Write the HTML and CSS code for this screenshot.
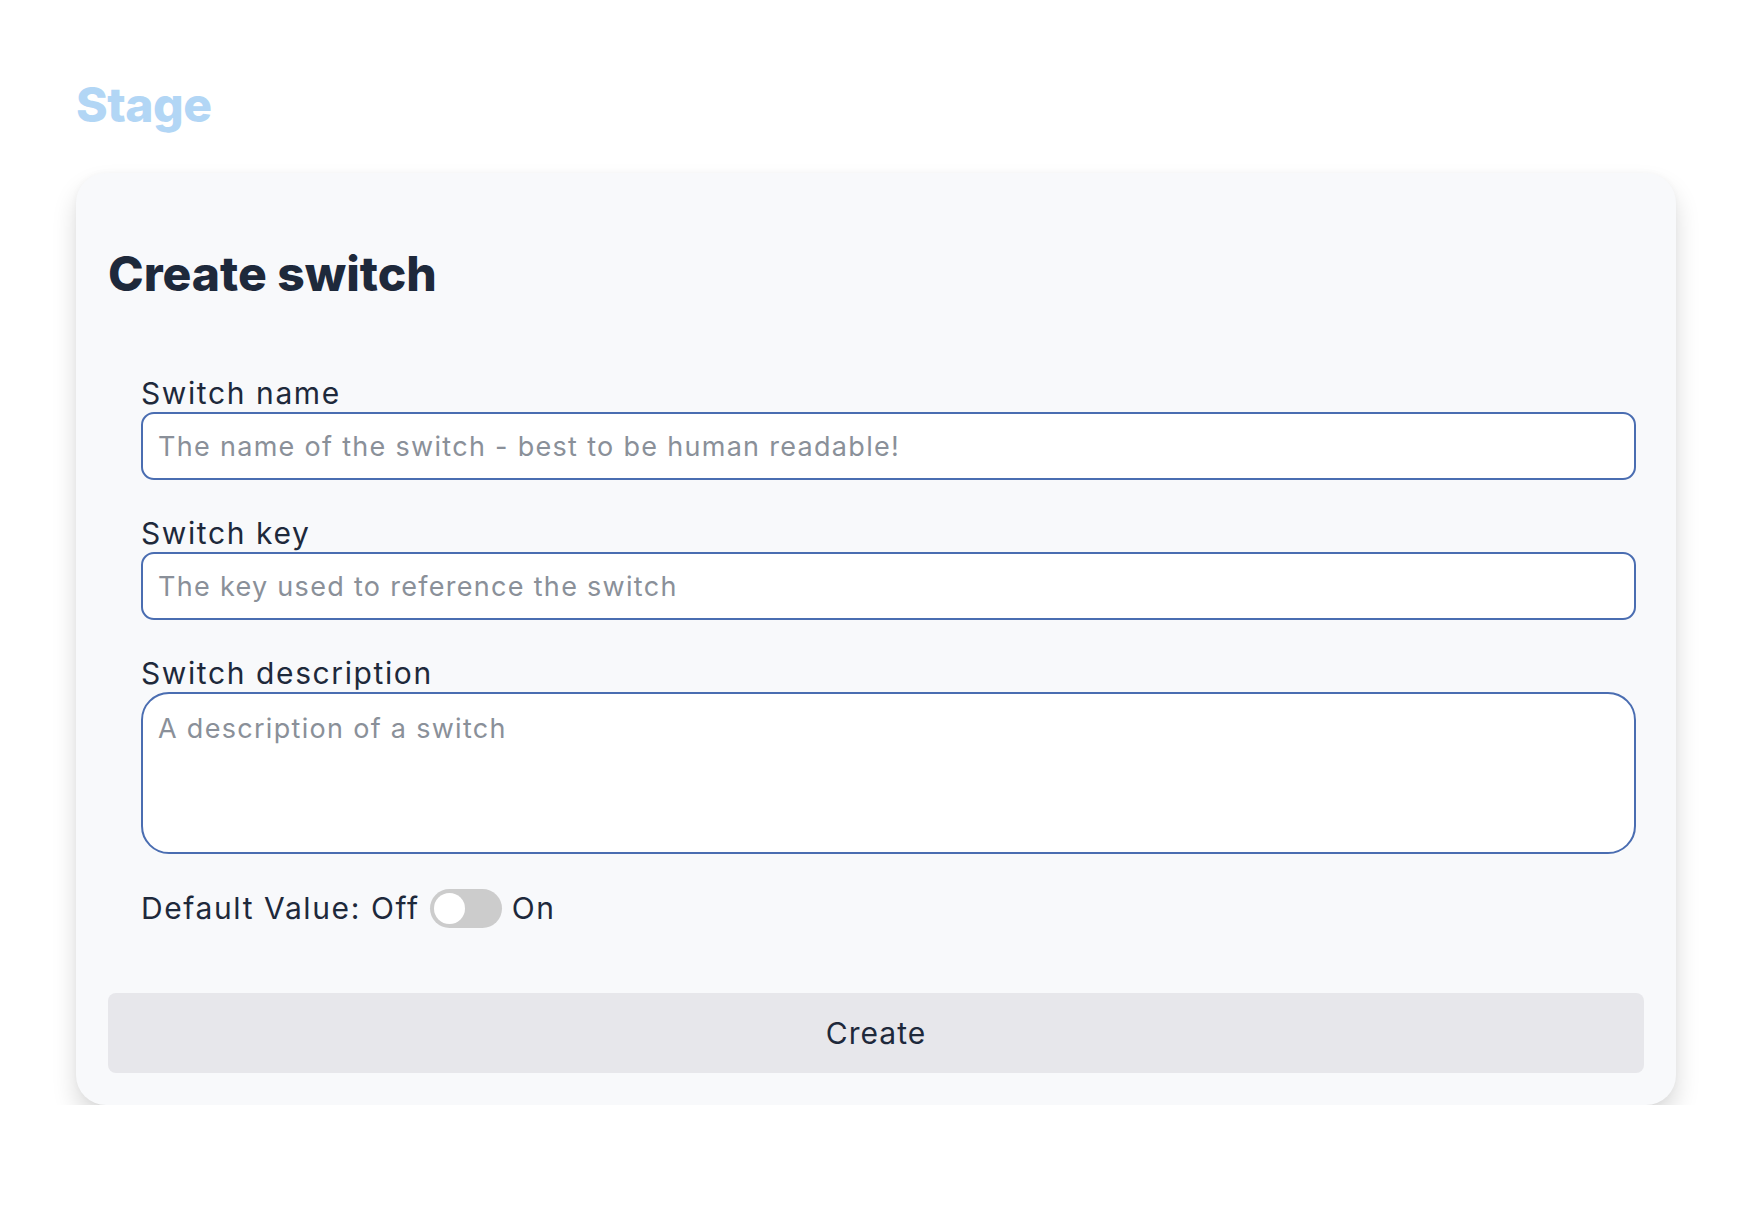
FILE: index.html
```html
<!DOCTYPE html>
<html lang="en">
<head>
<meta charset="utf-8">
<title>Create switch</title>
<link rel="stylesheet" href="styles.css">
</head>
<body>
<div class="page">
  <div class="logo">Stage</div>
  <div class="card">
    <h1 class="title">Create switch</h1>
    <form class="form">
      <div class="fields">
        <label class="label" for="name">Switch name</label>
        <input class="input" id="name" type="text" placeholder="The name of the switch - best to be human readable!">
        <label class="label label-next" for="key">Switch key</label>
        <input class="input" id="key" type="text" placeholder="The key used to reference the switch">
        <label class="label label-next" for="desc">Switch description</label>
        <textarea class="textarea" id="desc" placeholder="A description of a switch"></textarea>
        <div class="default-row">
          <span class="row-text">Default Value: Off</span>
          <span class="toggle"><span class="knob"></span></span>
          <span class="row-text">On</span>
        </div>
      </div>
      <button class="button" type="button">Create</button>
    </form>
  </div>
</div>
</body>
</html>
```

FILE: styles.css
```css
html, body {
  margin: 0;
  padding: 0;
  background: #ffffff;
}

body {
  font-family: Inter, "Open Sans", sans-serif;
  color: #1e293b;
}

.page {
  padding: 0 74px 0 76px;
}

.logo {
  font-size: 48px;
  line-height: 48px;
  font-weight: 800;
  color: #b2d6f5;
  margin-top: 81px;
  margin-bottom: 44px;
  letter-spacing: -0.5px;
}

.card {
  background: #f8f9fb;
  border-radius: 30px;
  padding: 32px;
  box-shadow: 0 14px 24px rgba(0, 0, 0, 0.15), 0 0 6px rgba(0, 0, 0, 0.03);
}

.title {
  margin: 45px 0 0 0;
  font-size: 48px;
  line-height: 48px;
  font-weight: 800;
  color: #1e293b;
}

.form {
  display: flex;
  flex-direction: column;
}

.fields {
  display: flex;
  flex-direction: column;
  margin: 80px 8px 0 33px;
}

.label {
  display: block;
  font-size: 30px;
  line-height: 30px;
  margin-bottom: 4px;
  letter-spacing: 1.6px;
  color: #1e293b;
}

.label-next {
  margin-top: 38px;
}

.input, .textarea {
  box-sizing: border-box;
  width: 100%;
  border: 2px solid #4a6db1;
  background: #ffffff;
  font-family: Inter, "Open Sans", sans-serif;
  font-size: 27px;
  letter-spacing: 1.3px;
  color: #1e293b;
  outline: none;
  margin: 0;
}

.input {
  height: 68px;
  border-radius: 13px;
  padding: 0 15px;
}

.textarea {
  height: 162px;
  border-radius: 28px;
  padding: 15px 15px;
  line-height: 40px;
  resize: none;
  display: block;
}

.input::placeholder, .textarea::placeholder {
  color: #8a9099;
  opacity: 1;
}

.default-row {
  display: flex;
  align-items: center;
  gap: 10px;
  margin-top: 35px;
  height: 39px;
}

.row-text {
  font-size: 30px;
  line-height: 39px;
  letter-spacing: 1.6px;
}

.toggle {
  position: relative;
  width: 72px;
  height: 39px;
  border-radius: 20px;
  background: #cccccc;
  flex: none;
}

.knob {
  position: absolute;
  left: 4px;
  top: 4px;
  width: 31px;
  height: 31px;
  border-radius: 50%;
  background: #ffffff;
}

.button {
  margin-top: 65px;
  height: 80px;
  width: 100%;
  border: none;
  border-radius: 8px;
  background: #e7e7eb;
  font-family: Inter, "Open Sans", sans-serif;
  font-size: 30px;
  letter-spacing: 1px;
  color: #1e293b;
  cursor: pointer;
}
```
